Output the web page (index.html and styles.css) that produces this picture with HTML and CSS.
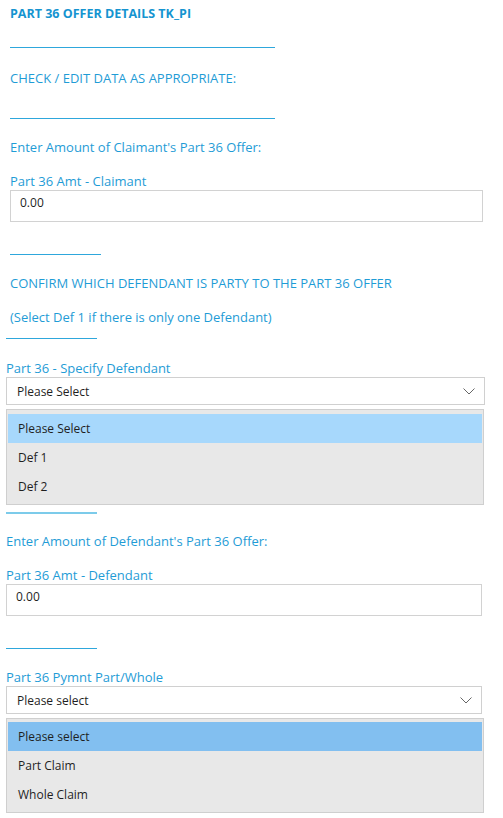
FILE: index.html
```html
<!DOCTYPE html>
<html>
<head>
<meta charset="utf-8">
<link rel="stylesheet" href="styles.css">
</head>
<body>
<div class="sec1">
  <div class="title">PART 36 OFFER DETAILS TK_PI</div>
  <div class="rule long r1"></div>
  <div class="text t-check">CHECK / EDIT DATA AS APPROPRIATE:</div>
  <div class="rule long r2"></div>
  <div class="text t-enter">Enter Amount of Claimant's Part 36 Offer:</div>
  <div class="label l-claim">Part 36 Amt - Claimant</div>
  <div class="input">0.00</div>
  <div class="rule short r3"></div>
  <div class="text t-confirm">CONFIRM WHICH DEFENDANT IS PARTY TO THE PART 36 OFFER</div>
  <div class="text t-select">(Select Def 1 if there is only one Defendant)</div>
</div>
<div class="sec2">
  <div class="rule short r4"></div>
  <div class="label l-spec">Part 36 - Specify Defendant</div>
  <div class="select">
    <span>Please Select</span>
    <svg class="chev" width="12" height="7" viewBox="0 0 12 7"><path d="M0.5 0.5 L6 6 L11.5 0.5" fill="none" stroke="#666" stroke-width="1"/></svg>
  </div>
  <div class="dropdown d1">
    <div class="item sel light">Please Select</div>
    <div class="item">Def 1</div>
    <div class="item">Def 2</div>
  </div>
  <div class="rule short thick r5"></div>
  <div class="text t-enter2">Enter Amount of Defendant's Part 36 Offer:</div>
  <div class="label l-def">Part 36 Amt - Defendant</div>
  <div class="input in2">0.00</div>
  <div class="rule short r6"></div>
  <div class="label l-pym">Part 36 Pymnt Part/Whole</div>
  <div class="select s2">
    <span>Please select</span>
    <svg class="chev" width="12" height="7" viewBox="0 0 12 7"><path d="M0.5 0.5 L6 6 L11.5 0.5" fill="none" stroke="#666" stroke-width="1"/></svg>
  </div>
  <div class="dropdown d2">
    <div class="item sel dark">Please select</div>
    <div class="item">Part Claim</div>
    <div class="item">Whole Claim</div>
  </div>
</div>
</body>
</html>
```
FILE: styles.css
```css
html { overflow: hidden; }
body {
  margin: 0;
  font-family: "Open Sans", "Noto Sans", sans-serif;
  font-size: 12px;
  color: #1f1f1f;
  background: #fff;
}
.sec1 { padding-left: 10px; width: 474px; }
.sec2 { padding-left: 6px; width: 479px; }

.title {
  margin-top: 4px;
  height: 20px;
  line-height: 20px;
  font-weight: 700;
  font-size: 12.5px;
  color: #1594d0;
}
.text, .label {
  color: #1f9cd6;
  font-size: 13px;
  height: 20px;
  line-height: 20px;
  white-space: nowrap;
}
.label { height: 18px; line-height: 18px; }

.rule { border-top: 1px solid #2ea7dc; height: 0; }
.rule.long { width: 265px; }
.rule.short { width: 91px; }
.rule.thick { border-top: 2px solid #7ccbea; }

.r1 { margin-top: 23px; }
.t-check { margin-top: 20px; }
.r2 { margin-top: 30px; }
.t-enter { margin-top: 18px; }
.l-claim { margin-top: 15px; }
.r3 { margin-top: 32px; }
.t-confirm { margin-top: 18px; }
.t-select { margin-top: 14px; }
.r4 { margin-top: 11px; }
.l-spec { margin-top: 20px; }
.r5 { margin-top: 7px; }
.t-enter2 { margin-top: 17px; }
.l-def { margin-top: 15px; }
.r6 { margin-top: 32px; }
.l-pym { margin-top: 19px; }

.input {
  box-sizing: border-box;
  height: 32px;
  border: 1px solid #d2d2d2;
  padding: 3px 9px 0;
  line-height: 18px;
  width: 473px;
}
.in2 { width: 476px; }

.select {
  box-sizing: border-box;
  height: 28px;
  border: 1px solid #d0d0d0;
  display: flex;
  align-items: center;
  justify-content: space-between;
  padding: 0 9px 0 10px;
  width: 479px;
}
.s2 { width: 476px; }
.chev { margin-top: 1px; }

.dropdown {
  box-sizing: border-box;
  margin-top: 4px;
  background: #e8e8e8;
  border: 1px solid #cfcfcf;
  padding: 4px 1px 3px;
  width: 478px;
}
.d2 { padding-top: 3px; }
.item {
  height: 29px;
  line-height: 29px;
  padding-left: 10px;
}
.item.light { background: #a7d8fc; }
.item.dark { background: #82bff0; }
```
